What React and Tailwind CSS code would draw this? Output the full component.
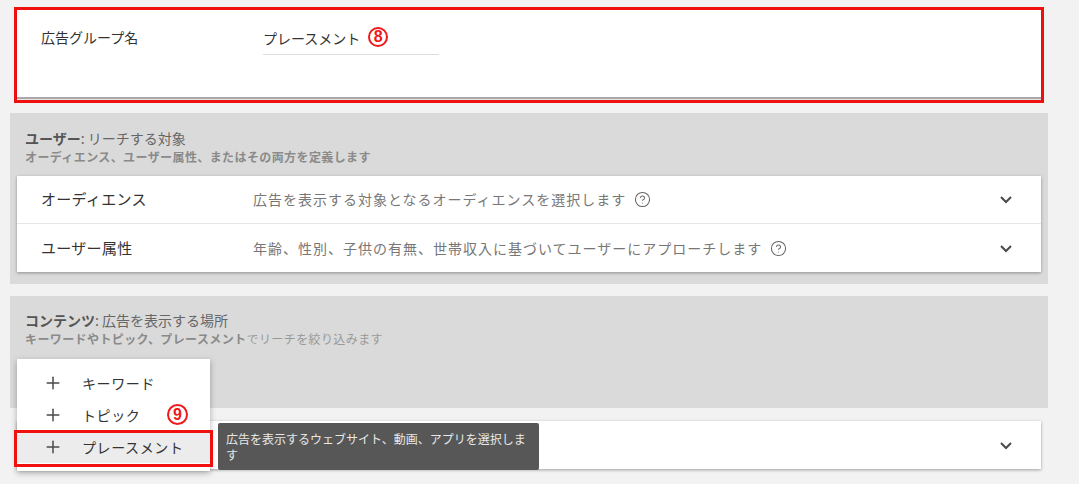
import { Plus, CircleHelp } from 'lucide-react';

const jp = { fontFamily: '"Noto Sans CJK JP", "Noto Sans", sans-serif' };

const Chevron = () => (
  <svg width="14" height="9" viewBox="0 0 14 9" className="shrink-0">
    <path d="M2 2 L7 7 L12 2" fill="none" stroke="#4a4a4a" strokeWidth="2" />
  </svg>
);

const Badge = ({ n, className = '' }) => (
  <span
    className={`inline-flex items-center justify-center w-[20px] h-[20px] rounded-full border-2 border-[#f01818] text-[#f01818] text-[16px] font-bold leading-none ${className}`}
    style={{ fontFamily: '"Liberation Sans", Arial, sans-serif' }}
  >
    {n}
  </span>
);

const Row = ({ label, desc, last }) => (
  <div className={`h-12 flex items-center pl-6 pr-[28px] ${last ? '' : 'border-b border-[#e6e6e6]'}`}>
    <div className="w-[212px] text-[15px] text-[#333] tracking-[0.3px]">{label}</div>
    <div className="flex-1 flex items-center gap-[8px] text-[14px] text-[#777] tracking-[1px]">
      {desc}
      <CircleHelp size={17} strokeWidth={1.5} color="#666" />
    </div>
    <Chevron />
  </div>
);

export default function App() {
  return (
    <div className="w-full h-[484px] bg-[#f2f2f2] overflow-hidden pt-[7px]" style={jp}>
      {/* ad group name */}
      <div className="ml-[14px] w-[1030px] border-[3px] border-[#f01010]">
        <div className="h-[87px] bg-white shadow-[0_2px_1px_rgba(0,0,0,0.3)] mb-[3px] flex pl-6 pt-[17px]">
          <div className="w-[222px] text-[14px] text-[#333] leading-5">広告グループ名</div>
          <div className="w-[176px] h-[28px] border-b border-[#dcdcdc] flex items-start gap-2">
            <span className="text-[14px] text-[#333] leading-5 pt-[1px]">プレースメント</span>
            <Badge n="8" />
          </div>
        </div>
      </div>

      {/* users */}
      <div className="mt-[10px] ml-[10px] w-[1038px] h-[171px] bg-[#dadada] pt-[15px]">
        <div className="pl-[15px] text-[14px] leading-5 text-[#666]">
          <span className="font-bold text-[#555]">ユーザー</span>: リーチする対象
        </div>
        <div className="pl-[15px] text-[12px] leading-4 font-bold text-[#8a8a8a] tracking-[0.4px] mt-[1px]">
          オーディエンス、ユーザー属性、またはその両方を定義します
        </div>
        <div className="ml-[7px] mt-[11px] w-[1024px] bg-white shadow-[0_1px_3px_rgba(0,0,0,0.35)]">
          <Row label="オーディエンス" desc="広告を表示する対象となるオーディエンスを選択します" />
          <Row label="ユーザー属性" desc="年齢、性別、子供の有無、世帯収入に基づいてユーザーにアプローチします" last />
        </div>
      </div>

      {/* contents */}
      <div className="relative mt-[12px]">
        <div className="ml-[10px] w-[1038px] h-[112px] bg-[#dadada] pt-[14px]">
          <div className="pl-[15px] text-[14px] leading-5 text-[#666]">
            <span className="font-bold text-[#555]">コンテンツ</span>: 広告を表示する場所
          </div>
          <div className="pl-[15px] text-[12px] leading-4 text-[#999] tracking-[0.4px] mt-[1px]">
            <span className="font-bold text-[#8a8a8a]">キーワードやトピック、プレースメント</span>でリーチを絞り込みます
          </div>
        </div>
        <div className="ml-[17px] mt-[13px] w-[1024px] h-12 bg-white shadow-[0_1px_3px_rgba(0,0,0,0.35)] flex items-center justify-end pr-[28px]">
          <Chevron />
        </div>

        {/* add menu */}
        <div className="absolute left-[17px] top-[63px] w-[193px] bg-white shadow-[0_2px_6px_rgba(0,0,0,0.3)] py-2">
          {['キーワード', 'トピック', 'プレースメント'].map((t, i) => (
            <div
              key={t}
              className={`h-8 flex items-center pl-[26px] gap-[19px] text-[14px] text-[#333] tracking-[0.6px] ${i === 2 ? 'bg-[#ececec]' : ''}`}
            >
              <Plus size={20} strokeWidth={1.8} color="#4a4a4a" />
              {t}
            </div>
          ))}
        </div>
        <div className="absolute left-[14px] top-[134px] w-[199px] h-[37px] border-[3px] border-[#f01010]" />
        <Badge n="9" className="absolute left-[167px] top-[108px] w-[21px] h-[21px]" />

        {/* tooltip */}
        <div className="absolute left-[218px] top-[127px] w-[321px] h-[47px] rounded-[2px] bg-[#575757] text-[#e8e8e8] text-[12px] leading-4 pl-2 pr-1 pt-2">
          広告を表示するウェブサイト、動画、アプリを選択します
        </div>
      </div>
    </div>
  );
}
